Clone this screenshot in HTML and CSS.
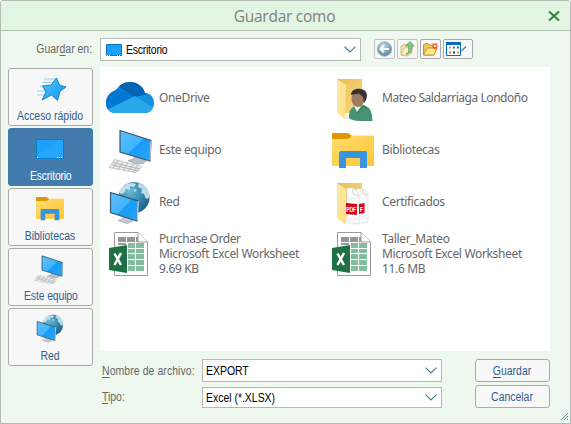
FILE: index.html
```html
<!DOCTYPE html>
<html lang="es">
<head>
<meta charset="utf-8">
<title>Guardar como</title>
<link rel="stylesheet" href="styles.css">
</head>
<body>
<svg class="defs" aria-hidden="true">
  <defs>
    <linearGradient id="gScreen" x1="0" y1="0" x2="1" y2="1"><stop offset="0" stop-color="#5dc0ff"/><stop offset=".5" stop-color="#42b3fd"/><stop offset=".52" stop-color="#189cf5"/><stop offset="1" stop-color="#28a5fa"/></linearGradient>
    <linearGradient id="gFolder" x1="0" y1="0" x2="1" y2="1"><stop offset="0" stop-color="#ffdc72"/><stop offset="1" stop-color="#ffc633"/></linearGradient>
    <linearGradient id="gFlap" x1="0" y1="0" x2="1" y2="1"><stop offset="0" stop-color="#ffe9a8"/><stop offset="1" stop-color="#ffe083"/></linearGradient>
    <linearGradient id="gBack" x1="0" y1="0" x2="1" y2="1"><stop offset="0" stop-color="#e9bf55"/><stop offset="1" stop-color="#f8da82"/></linearGradient>
    <radialGradient id="gGlobe" cx=".35" cy=".3" r=".8"><stop offset="0" stop-color="#6db9d6"/><stop offset=".55" stop-color="#3587ad"/><stop offset="1" stop-color="#1d587e"/></radialGradient>
    <linearGradient id="gStar" x1="0" y1="0" x2="1" y2="1"><stop offset="0" stop-color="#4fc8ff"/><stop offset="1" stop-color="#1292ec"/></linearGradient>
    <radialGradient id="gBall" cx=".4" cy=".25" r=".8"><stop offset="0" stop-color="#c6dbe6"/><stop offset=".6" stop-color="#7ba3bd"/><stop offset="1" stop-color="#5c86a3"/></radialGradient>
    <clipPath id="cCloud"><path id="cloudShape" d="M10 41C5 41 1 37 1 31C1 25 5 20 11 18C14 13 19 10 25 10C32 10 38 14 40 21C45 21 49 25 49 31C49 37 45 41 40 41Z"/></clipPath>
  </defs>
  <symbol id="computer" viewBox="0 0 54 52">
    <path d="M29 31L37 34L41 37L38 39.500L31 40L23 36.500L29 35Z" fill="#b9bfc4" stroke="#8c9297" stroke-width=".6"/>
    <path d="M4 43.500L9.500 35.500L37 42.500L31 48.500Z" fill="#eceded" stroke="#b2b6b9" stroke-width=".7"/>
    <path d="M8 38.500L35 45M6.500 40.700L33.500 47M13 36.500L8 44M18 38L13 45.500M23 39L18 46.500M28 40.500L23 47.500M33 41.500L28 48" stroke="#a3a8ac" stroke-width=".8"/>
    <path d="M15 6.500L46 16.500L45 37L15 28Z" fill="url(#gScreen)" stroke="#35566d" stroke-width="1.200"/>
    <path d="M45.800 17L45 36.500" stroke="#b6c2cb" stroke-width="1.200"/>
  </symbol>
  <symbol id="network" viewBox="0 0 54 52">
    <circle cx="29" cy="21.500" r="15.500" fill="url(#gGlobe)"/>
    <path d="M17 11L22 8L27 7L31 8L29 11L25 10L25 14L21 13L19 17L16 18L14 16ZM34 7L40 10L44 16L44 22L41 23L39 18L36 17L37 13L33 11ZM28 13L32 14L30 16Z" fill="#d4ecf2" opacity=".85"/>
    <path d="M18 40L25 42L28 45L22 47.500L13 44.500L18 43Z" fill="#c5cbd0" stroke="#8c9297" stroke-width=".6"/>
    <path d="M5.500 16.500L33 25L32 45L5.500 36.500Z" fill="url(#gScreen)" stroke="#35566d" stroke-width="1.200"/>
    <path d="M33.200 25L32.300 44.500" stroke="#c5d3dc" stroke-width="1.300"/>
  </symbol>
  <symbol id="library" viewBox="0 0 54 52">
    <path d="M4 10Q4 9 5 9H20L24 12L20 17H4Z" fill="#dc9a00"/>
    <path d="M4 15H20L25 11.500H45Q46 11.500 46 12.500V41Q46 42 45 42H5Q4 42 4 41Z" fill="url(#gFolder)"/>
    <path d="M11 44V29Q11 27 13 27H37Q39 27 39 29V44H32V34H18V44Z" fill="#3994df"/>
  </symbol>
  <symbol id="excel" viewBox="0 0 54 52">
    <path d="M9.500 4.500H33L42.500 14V47.500H9.500Z" fill="#fff" stroke="#9b9b9b"/>
    <path d="M33 4.500V14H42.500" fill="#fff" stroke="#9b9b9b"/>
    <path d="M13 9H21V14H13ZM22 9H30V14H22ZM31 9H33V14H31ZM13 15H21V17H13Z" fill="#969696"/>
    <path d="M23 15H30V20H23ZM31 15H39V20H31ZM23 21H30V25H23ZM31 21H39V25H31ZM23 26H30V31H23ZM31 26H39V31H31ZM23 32H30V37H23ZM31 32H39V37H31ZM23 38H30V43H23ZM31 38H39V43H31Z" fill="#84bd9d"/>
    <path d="M4 20L22 17V45L4 42Z" fill="#1e7145"/>
    <path d="M9.500 25.500L16 37M16 25L9.500 37" stroke="#fff" stroke-width="2.500"/>
  </symbol>
</svg>
<div class="window">
  <header class="titlebar"><span></span><h1>Guardar como</h1>
    <svg class="close" viewBox="0 0 12 12"><path d="M1 1.500L11 10.500M11 1.500L1 10.500" stroke="#2d8635" stroke-width="2"/></svg>
  </header>
  <div class="toolbar">
    <label class="look"><span class="narrow end">Guar<u>d</u>ar en:</span></label>
    <div class="combo place">
      <svg width="16" height="12" viewBox="0 0 16 12"><path d="M.5.5H15.500V11.500H.5Z" fill="#1ca2fb" stroke="#0874b8"/><path d="M1 11.500H5M11 11.500H15" stroke="#fff" stroke-dasharray="1"/></svg>
      <span class="value"><span class="narrow start t-desk">Escritorio</span></span>
      <svg class="chev" viewBox="0 0 12 7"><path d="M.5.7L6 6L11.500.7" /></svg>
    </div>
    <div class="tools">
      <button class="tool off"><svg width="19" height="18" viewBox="0 0 19 18"><circle cx="9.500" cy="9" r="7.200" fill="url(#gBall)" stroke="#8aa2b1" stroke-width=".8"/><path d="M14 9H6M9 5.500L5.500 9L9 12.500" fill="none" stroke="#f5fafc" stroke-width="2"/></svg></button>
      <button class="tool off"><svg width="19" height="18" viewBox="0 0 19 18"><path d="M3 15V6L7 4L9 5.500L14 4V13L9 16Z" fill="#f3e3a3" stroke="#c9b569" stroke-width=".8"/><path d="M3 15L6 8L15 6.500L12 15Z" fill="#fbf2c8" stroke="#cdbb74" stroke-width=".7"/><path d="M8 14C11 13 11 11 10.500 6H7.500L12 1.500L16 6H13.500C14 11 12 14 8 14Z" fill="#83c78b" stroke="#579d63" stroke-width=".8"/></svg></button>
      <button class="tool"><svg width="19" height="18" viewBox="0 0 19 18"><path d="M2.500 15V5L4 3.500H7L8.500 5H13V15Z" fill="#eec64e" stroke="#bd8e22" stroke-width=".9"/><path d="M2.500 15L6 8H16L13 15Z" fill="#ffe58b" stroke="#be922e" stroke-width=".9"/><path d="M14 3V9.500M11 6H17.500M11.700 3.700L16.300 8.300M16.300 3.700L11.700 8.300" stroke="#f14b24" stroke-width="1.200"/><circle cx="14" cy="6" r="1.300" fill="#fff0b0"/></svg></button>
      <button class="tool wide"><svg width="28" height="18" viewBox="0 0 28 18"><path d="M2.500 2.500H16.500V15.500H2.500Z" fill="#fff" stroke="#0869c9"/><path d="M2 2H17V5H2Z" fill="#0869c9"/><path d="M5 6.500H7V8.500H5Z" fill="#a8a3b5"/><path d="M9 6.500H11V8.500H9Z" fill="#6262b5"/><path d="M13 6.500H15V8.500H13Z" fill="#188447"/><path d="M5 11.500H7V13.500H5Z" fill="#e47645"/><path d="M9 11.500H11V13.500H9Z" fill="#222a9c"/><path d="M13 11.500H15V13.500H13Z" fill="#c3a21c"/><path d="M17.500 11L22 6.500" stroke="#527ea2" stroke-width="1.200"/></svg></button>
    </div>
  </div>
  <main class="content">
    <nav class="sidebar">
      <button class="nav-item"><svg viewBox="0 0 83 43"><path d="M35 10H48M33 13.500H44M31 17H40M28 22H37M28 26H38" stroke="#8acdf2" stroke-width=".9"/><path d="M47.500 9L50.500 16L57 18L51 22.500L48.500 31.500L42.500 26L33 31L37 23L33.500 17L42 16Z" fill="url(#gStar)" stroke="#157cb9" stroke-width=".9" stroke-linejoin="round"/></svg><span class="narrow">Acceso rápido</span></button>
      <button class="nav-item active"><svg viewBox="0 0 83 43"><path d="M27.500 10.500H54.500V29.500H27.500Z" fill="#1ca2fb" stroke="#087ec6"/><path d="M28 26L50 11H54V29H28Z" fill="#36afff" opacity=".3"/><path d="M28 28.500H30M48 28.500H54" stroke="#fff" stroke-dasharray="1"/></svg><span class="narrow t-desk">Escritorio</span></button>
      <button class="nav-item"><svg viewBox="0 0 83 43"><use href="#library" x="24.300" y="2" width="36" height="34.700"/></svg><span class="narrow">Bibliotecas</span></button>
      <button class="nav-item"><svg viewBox="0 0 83 43"><use href="#computer" x="23" y="2.500" width="36" height="34.700"/></svg><span class="narrow t-pc">Este equipo</span></button>
      <button class="nav-item"><svg viewBox="0 0 83 43"><use href="#network" x="24.500" y="1.500" width="36" height="34.700"/></svg><span class="narrow">Red</span></button>
    </nav>
    <section class="files">
      <div class="file"><svg viewBox="0 0 54 52"><g clip-path="url(#cCloud)"><path d="M0 8H50V42H0Z" fill="#1490df"/><path d="M0 17L13 17L30 24L1 38Z" fill="#0078d4"/><path d="M10 8H42V22L30 25L16 17Z" fill="#0364b8"/><path d="M2 38L30 24L49 36V42H2Z" fill="#28a8ea"/></g></svg><p>OneDrive</p></div>
      <div class="file"><svg viewBox="0 0 54 52"><path d="M9 7H34V41H16Z" fill="url(#gBack)"/><path d="M17 42L22 44L23 47L17 47Z" fill="#eee"/><path d="M9 7L18 13L17 47L9 41Z" fill="url(#gFlap)"/><path d="M21 46C20.500 39 23 36 27 34L36 33L41 36Q44 39 44.500 49H32Q24 49 21 46Z" fill="#479273"/><path d="M26 34L29 40L34 33Z" fill="#e7f0ee"/><path d="M29 41L36 34L39 37" fill="none" stroke="#31785a"/><ellipse cx="30" cy="27" rx="6.500" ry="8" fill="#a17b5f"/><path d="M23 23C23 18 28 16 33 17C38 18 40.500 22 38 28L36 31L35 25L31 21.500Z" fill="#353331"/></svg><p class="t-user">Mateo Saldarriaga Londoño</p></div>
      <div class="file"><svg><use href="#computer"/></svg><p>Este equipo</p></div>
      <div class="file"><svg><use href="#library"/></svg><p>Bibliotecas</p></div>
      <div class="file"><svg><use href="#network"/></svg><p>Red</p></div>
      <div class="file"><svg viewBox="0 0 54 52"><path d="M9 7H34V41H16Z" fill="url(#gBack)"/><path d="M28 13H36L40 18V46L28 48Z" fill="#fafafa" stroke="#ddd" stroke-width=".7"/><path d="M19 12H26L31 19V48L19 46Z" fill="#fff" stroke="#ddd" stroke-width=".7"/><path d="M25 12V18L31 20M35 13V18L40 19" fill="none" stroke="#ccc" stroke-width=".8"/><path d="M20 22H30M20 24H30M20 42H30M20 44H30M33 22H39M33 40H39M33 42H39" stroke="#e4e4e4" stroke-width=".7"/><path d="M18 27L29 28V39L18 38ZM31 28L36.500 27V37L31 38Z" fill="#d8001b"/><text class="pdf" transform="translate(18.300 35.500) scale(.8 1)">PDF</text><text class="pdf" transform="translate(32 35.500) scale(.8 1)">F</text><path d="M9 7L18 13V49L9 42Z" fill="url(#gFlap)"/></svg><p>Certificados</p></div>
      <div class="file"><svg><use href="#excel"/></svg><p><span class="t-order">Purchase Order</span><br>Microsoft Excel Worksheet<br>9.69 KB</p></div>
      <div class="file"><svg><use href="#excel"/></svg><p>Taller_Mateo<br>Microsoft Excel Worksheet<br>11.6 MB</p></div>
    </section>
  </main>
  <footer class="form">
    <label><span class="narrow start t-name"><u>N</u>ombre de archivo:</span></label>
    <div class="combo"><span class="value"><span class="narrow start">EXPORT</span></span><svg class="chev" viewBox="0 0 12 7"><path d="M.5.7L6 6L11.500.7"/></svg></div>
    <button class="action"><span class="narrow"><u>G</u>uardar</span></button>
    <label><span class="narrow start"><u>T</u>ipo:</span></label>
    <div class="combo type"><span class="value"><span class="narrow start">Excel (*.XLSX)</span></span><svg class="chev" viewBox="0 0 12 7"><path d="M.5.7L6 6L11.500.7"/></svg></div>
    <button class="action"><span class="narrow">Cancelar</span></button>
  </footer>
  <svg class="grip" viewBox="0 0 9 9"><path d="M1 8L8 1M4 8L8 4M7 8L8 7" stroke="#5484a6"/></svg>
</div>
</body>
</html>
```
FILE: styles.css
```css
* { box-sizing: border-box; }
body { margin: 0; background: #fff; font: 12px/14px "Liberation Sans", sans-serif; color: #666; overflow: hidden; }
.defs { position: absolute; width: 0; height: 0; }
h1, p { margin: 0; }
button { font: inherit; padding: 0; border: 1px solid #aaa; border-radius: 3px; background: #f7f7f7; color: #33608f; }
svg { display: block; flex: none; }
u { text-underline-offset: 2px; text-decoration-thickness: 1px; }
.narrow { display: inline-block; transform: scaleX(.87); white-space: nowrap; }
.narrow.start { transform-origin: left; }
.narrow.end { transform-origin: right; }

.window { position: relative; width: 571px; height: 424px; border: 1px solid #b4bab4; border-radius: 3px 3px 0 0; background: #eef8ef; }
.titlebar { display: grid; grid-template-columns: 1fr auto 1fr; align-items: center; height: 30px; padding: 0 10px 0 8px; border-bottom: 1px solid #b2bdb2; background: #e2f5e2; border-radius: 2px 2px 0 0; }
.titlebar h1 { font: 400 15.500px/22px "Open Sans", sans-serif; letter-spacing: -.25px; color: #808080; padding-top: 1px; }
.close { width: 12px; height: 12px; justify-self: end; margin-top: 1px; }

.toolbar { display: flex; height: 36px; padding: 7px 0 0 7px; }
.look { width: 92px; padding: 4px 8px 0 0; text-align: right; }
.combo { display: flex; align-items: center; width: 240px; height: 23px; padding: 0 4px 0 3px; border: 1px solid #b5b9b5; background: #fff; color: #000; }
.place { width: 261px; padding-left: 5px; }
.place .value { padding-left: 4px; }
.value { flex: 1; white-space: nowrap; }
.chev { width: 12px; height: 7px; }
.chev path { fill: none; stroke: #427696; stroke-width: 1.100; }
.tools { display: flex; gap: 2px; margin: 1px 0 0 13px; }
.tool { width: 21px; height: 20px; border-radius: 2px; }
.tool.off { border-color: #c0c4c0; }
.tool.wide { width: 30px; }

.content { display: flex; gap: 7px; height: 284px; padding-left: 7px; }
.sidebar { display: flex; flex-direction: column; gap: 2px; padding-top: 1px; margin-bottom: -17px; }
.nav-item { display: flex; flex-direction: column; align-items: center; width: 85px; height: 58px; flex: none; }
.nav-item svg { width: 83px; height: 43px; margin-bottom: -3px; }
.nav-item.active { border-color: #427bac; background: #427bac; color: #fff; }
.t-desk { letter-spacing: -.25px; }
.t-pc { letter-spacing: -.15px; }
.t-name { letter-spacing: .1px; }
.files { display: grid; grid-template-columns: 223px 222px; grid-auto-rows: 52px; align-content: start; width: 450px; padding: 5px 0 0 5px; background: #fff; }
.file { display: flex; align-items: center; white-space: nowrap; font: 12px/15px "Noto Sans", sans-serif; letter-spacing: -.34px; }
.file svg { width: 54px; height: 52px; }
.file p { padding-bottom: 1px; }
.t-user { letter-spacing: -.45px; }
.t-order { letter-spacing: -.48px; }
.pdf { font: 700 6.500px "Liberation Sans", sans-serif; fill: #fff; letter-spacing: -.3px; }

.form { display: grid; grid-template-columns: 100px 240px 75px; grid-template-rows: 23px 23px; row-gap: 3px; padding: 8px 0 0 101px; align-items: center; }
.form label { white-space: nowrap; }
.form .type { height: 21px; align-self: end; }
.action { width: 75px; height: 23px; margin-left: 33px; }
.grip { position: absolute; right: 1px; bottom: 2px; width: 9px; height: 9px; }
```
